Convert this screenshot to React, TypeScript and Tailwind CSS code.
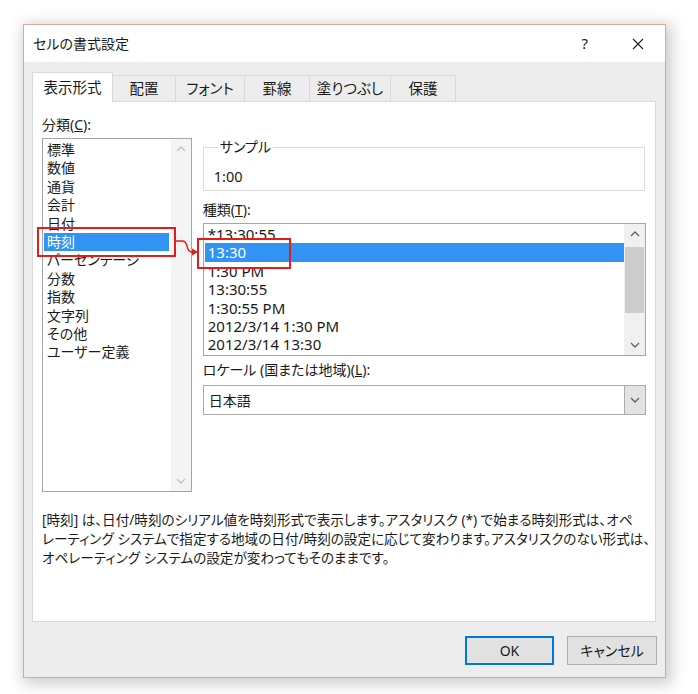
import React from 'react'

const categories = ['標準', '数値', '通貨', '会計', '日付', '時刻', 'パーセンテージ', '分数', '指数', '文字列', 'その他', 'ユーザー定義']
const types = ['*13:30:55', '13:30', '1:30 PM', '13:30:55', '1:30:55 PM', '2012/3/14 1:30 PM', '2012/3/14 13:30']
const tabs = [
  { label: '表示形式', w: 'w-[81px]' },
  { label: '配置', w: 'w-[63px]' },
  { label: 'フォント', w: 'w-[69px]' },
  { label: '罫線', w: 'w-[65px]' },
  { label: '塗りつぶし', w: 'w-[81px]' },
  { label: '保護', w: 'w-[65px]' },
]

const Chevron = ({ up, color = '#606060' }: { up?: boolean; color?: string }) => (
  <svg width="10" height="6" viewBox="0 0 10 6">
    <polyline points={up ? '1,5 5,1 9,5' : '1,1 5,5 9,1'} fill="none" stroke={color} strokeWidth="1.3" />
  </svg>
)

const App = () => {
  return (
    <div className="relative w-[698px] h-[694px] bg-white pt-[24px] pl-[23px] text-[#1a1a1a] font-['Noto_Sans','Noto_Sans_CJK_JP',sans-serif] [font-feature-settings:'palt']">
      <div className="w-[643px] h-[654px] flex flex-col border border-[#dcaa94] bg-white shadow-[3px_3px_14px_3px_rgba(0,0,0,0.2)]">
        {/* title bar */}
        <div className="h-[37px] flex items-center justify-between pl-[9px] pr-[21px]">
          <span className="text-[14px]">セルの書式設定</span>
          <div className="flex items-center gap-[44px]">
            <span className="text-[15px]">?</span>
            <svg width="12" height="12" viewBox="0 0 12 12">
              <path d="M1 1 L11 11 M11 1 L1 11" stroke="#222" strokeWidth="1.1" />
            </svg>
          </div>
        </div>

        {/* body */}
        <div className="flex-1 bg-[#ededed] pt-[10px] px-[8px]">
          <div className="flex items-end h-[30px] -mb-px relative z-10">
            {tabs.map((t, i) => (
              <div
                key={t.label}
                className={
                  i === 0
                    ? `${t.w} h-[30px] bg-white border border-b-0 border-[#d9d9d9] flex items-center justify-center text-[14.5px]`
                    : `${t.w} h-[27px] bg-[#ededed] border border-l-0 border-[#d9d9d9] flex items-center justify-center text-[14.5px]`
                }
              >
                {t.label}
              </div>
            ))}
          </div>

          <div className="w-[624px] h-[521px] bg-white border border-[#d9d9d9] px-[9px] pt-[14px]">
            <div className="flex gap-[11px]">
              {/* category column */}
              <div className="w-[150px]">
                <div className="h-[18px] leading-[18px] text-[14px]">
                  分類(<u>C</u>):
                </div>
                <div className="mt-[4px] h-[354px] border border-[#a5a5a5] flex">
                  <div className="flex-1 pt-[2px] pl-[1px] pr-[2px]">
                    {categories.map((c) => (
                      <div
                        key={c}
                        className={`h-[18.4px] leading-[18.4px] pl-[3px] text-[14px] ${c === '時刻' ? 'bg-[#3393f5] text-white' : ''}`}
                      >
                        {c}
                      </div>
                    ))}
                  </div>
                  <div className="w-[20px] bg-[#f4f4f4] flex flex-col items-center justify-between py-[7px]">
                    <Chevron up color="#c2c2c2" />
                    <Chevron color="#c2c2c2" />
                  </div>
                </div>
              </div>

              {/* right column */}
              <div className="w-[444px] pt-[22px]">
                <fieldset className="w-[442px] h-[53px] border border-[#dcdcdc] pl-[10px]">
                  <legend className="ml-[4px] px-[2px] h-[18px] leading-[18px] text-[14px]">サンプル</legend>
                  <div className="mt-[11px] h-[18px] leading-[18px] text-[14.5px]">1:00</div>
                </fieldset>

                <div className="mt-[10px] h-[18px] leading-[18px] text-[14px]">
                  種類(<u>T</u>):
                </div>
                <div className="mt-[4px] h-[133px] border border-[#a5a5a5] flex">
                  <div className="flex-1 pt-[1px] pl-[1px]">
                    {types.map((t, i) => (
                      <div
                        key={t}
                        className={`h-[18.4px] leading-[18.4px] pl-[3px] text-[15px] ${i === 1 ? 'bg-[#3393f5] text-white' : ''}`}
                      >
                        {t}
                      </div>
                    ))}
                  </div>
                  <div className="w-[21px] bg-[#f0f0f0] flex flex-col items-center">
                    <div className="h-[20px] flex items-center justify-center">
                      <Chevron up />
                    </div>
                    <div className="flex-1 w-full px-[1px]">
                      <div className="mt-[3px] h-[66px] bg-[#cdcdcd]" />
                    </div>
                    <div className="h-[20px] flex items-center justify-center">
                      <Chevron />
                    </div>
                  </div>
                </div>

                <div className="mt-[5px] h-[18px] leading-[18px] text-[14px]">
                  ロケール (国または地域)(<u>L</u>):
                </div>
                <div className="mt-[6px] h-[30px] border border-[#acacac] flex items-stretch">
                  <div className="flex-1 pl-[5px] flex items-center text-[14px]">日本語</div>
                  <div className="w-[21px] bg-[#e3e3e3] border-l border-[#acacac] flex items-center justify-center">
                    <Chevron />
                  </div>
                </div>
              </div>
            </div>

            <p className="mt-[18px] text-[13.6px] leading-[19px] whitespace-nowrap">
              [時刻] は、日付/時刻のシリアル値を時刻形式で表示します。アスタリスク (*) で始まる時刻形式は、オペ
              <br />
              レーティング システムで指定する地域の日付/時刻の設定に応じて変わります。アスタリスクのない形式は、
              <br />
              オペレーティング システムの設定が変わってもそのままです。
            </p>
          </div>

          <div className="mt-[14px] flex justify-end gap-[13px] pr-[0px]">
            <button className="w-[89px] h-[29px] bg-[#e1e1e1] border-2 border-[#0078d7] text-[14px]">OK</button>
            <button className="w-[90px] h-[29px] bg-[#e1e1e1] border border-[#adadad] text-[14px]">キャンセル</button>
          </div>
        </div>
      </div>

      {/* red annotations */}
      <svg className="absolute left-0 top-0 pointer-events-none" width="698" height="694">
        <rect x="38" y="228" width="137" height="28" fill="none" stroke="#e21b1b" strokeWidth="2" />
        <rect x="198" y="239" width="92" height="29" fill="none" stroke="#e21b1b" strokeWidth="2" />
        <path d="M176 241 L182 241 Q186 241 187 246 Q188 252 192 252 L193 252" fill="none" stroke="#e21b1b" strokeWidth="1.5" />
        <polygon points="192,248.5 198,252 192,255.5" fill="#e21b1b" />
      </svg>
    </div>
  )
}

export default App
